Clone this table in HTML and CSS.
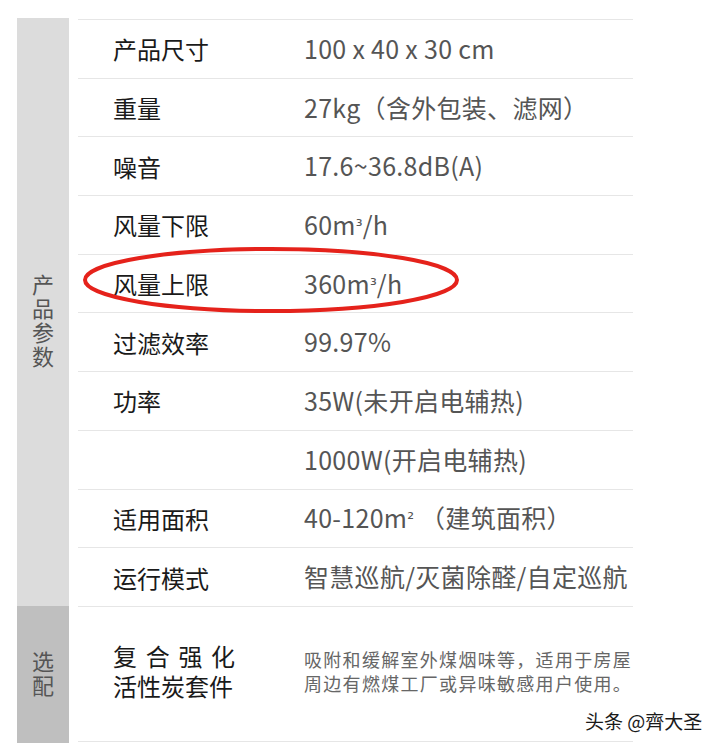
FILE: index.html
```html
<!DOCTYPE html>
<html lang="zh">
<head>
<meta charset="utf-8">
<link rel="stylesheet" href="styles.css">
</head>
<body>
<div class="sheet">
  <div class="side">
    <div class="side-sec side-main"><span class="vtext">产品参数</span></div>
    <div class="side-sec side-opt"><span class="vtext">选配</span></div>
  </div>
  <div class="table">
    <div class="row"><div class="k">产品尺寸</div><div class="v">100 x 40 x 30 cm</div></div>
    <div class="row"><div class="k">重量</div><div class="v">27kg（含外包装、滤网）</div></div>
    <div class="row"><div class="k">噪音</div><div class="v">17.6~36.8dB(A)</div></div>
    <div class="row"><div class="k">风量下限</div><div class="v">60m<span class="sup">³</span>/h</div></div>
    <div class="row"><div class="k">风量上限</div><div class="v">360m<span class="sup">³</span>/h</div></div>
    <div class="row"><div class="k">过滤效率</div><div class="v">99.97%</div></div>
    <div class="row"><div class="k">功率</div><div class="v">35W(未开启电辅热)</div></div>
    <div class="row"><div class="k"></div><div class="v">1000W(开启电辅热)</div></div>
    <div class="row"><div class="k">适用面积</div><div class="v">40-120m<span class="sup">²</span> （建筑面积）</div></div>
    <div class="row"><div class="k">运行模式</div><div class="v">智慧巡航/灭菌除醛/自定巡航</div></div>
    <div class="row row-opt">
      <div class="k k-opt"><span class="l1 spread">复合强化</span><span class="l1">活性炭套件</span></div>
      <div class="desc">吸附和缓解室外煤烟味等，适用于房屋<br>周边有燃煤工厂或异味敏感用户使用。</div>
    </div>
  </div>
  <svg class="mark" width="390" height="80" viewBox="0 0 390 80">
    <ellipse cx="189" cy="34" rx="186" ry="31" fill="none" stroke="#e5221b" stroke-width="4"/>
  </svg>
  <div class="wm">头条 @齊大圣</div>
</div>
</body>
</html>
```
FILE: styles.css
```css
html, body {
  margin: 0;
  padding: 0;
  background: #ffffff;
}
body {
  font-family: "Noto Sans CJK SC", "Noto Sans", sans-serif;
}
.sheet {
  position: relative;
  width: 712px;
  height: 751px;
  display: flex;
  padding: 18px 0 0 17px;
  box-sizing: border-box;
}
.side {
  width: 52px;
  display: flex;
  flex-direction: column;
}
.side-sec {
  display: flex;
  align-items: center;
  justify-content: center;
  color: #555555;
  font-size: 22px;
}
.side-main {
  height: 588px;
  background: #dcdcdc;
  padding-top: 20px;
  box-sizing: border-box;
}
.side-opt {
  height: 137px;
  background: #bfbfbf;
}
.vtext {
  writing-mode: vertical-rl;
  line-height: 24px;
  letter-spacing: 2px;
}
.table {
  margin-left: 9px;
  width: 555px;
  padding-top: 1px;
  border-bottom: 1px solid #e6e6e6;
  height: 724px;
  box-sizing: border-box;
}
.row {
  display: flex;
  align-items: center;
  height: 58.7px;
  border-top: 1px solid #e6e6e6;
  box-sizing: border-box;
}
.k {
  width: 226px;
  flex: none;
  padding-left: 35px;
  box-sizing: border-box;
  font-size: 24px;
  color: #1a1a1a;
}
.v {
  font-size: 25px;
  color: #555555;
  letter-spacing: 0.3px;
  white-space: nowrap;
  margin-top: -2px;
}
.sup {
  font-family: "DejaVu Sans", sans-serif;
  font-size: 17px;
  vertical-align: 3px;
  letter-spacing: 0;
}
.row-opt {
  height: 136px;
}
.k-opt {
  display: flex;
  flex-direction: column;
  margin-top: -6px;
}
.l1 {
  display: block;
  height: 30px;
  line-height: 30px;
}
.spread {
  letter-spacing: 8.7px;
}
.desc {
  font-size: 18px;
  line-height: 24px;
  letter-spacing: 1.3px;
  color: #666666;
  margin-top: -6px;
  white-space: nowrap;
}
.mark {
  position: absolute;
  left: 82px;
  top: 246px;
}
.wm {
  position: absolute;
  left: 585px;
  top: 707px;
  font-size: 19px;
  color: #1a1a1a;
  text-shadow: 0 0 2px #ffffff, 0 0 2px #ffffff;
}
```
